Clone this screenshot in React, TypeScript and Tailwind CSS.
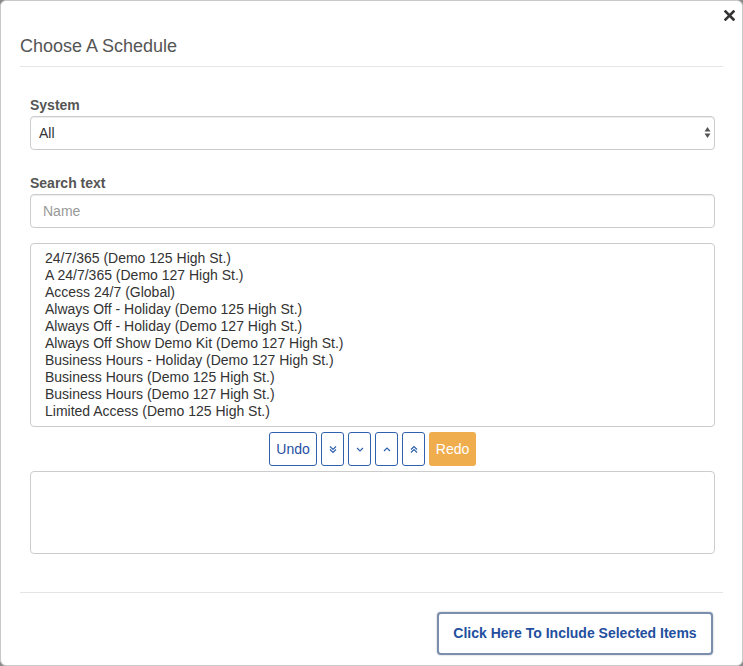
import React, { useState } from 'react';

const schedules = [
  '24/7/365 (Demo 125 High St.)',
  'A 24/7/365 (Demo 127 High St.)',
  'Access 24/7 (Global)',
  'Always Off - Holiday (Demo 125 High St.)',
  'Always Off - Holiday (Demo 127 High St.)',
  'Always Off Show Demo Kit (Demo 127 High St.)',
  'Business Hours - Holiday (Demo 127 High St.)',
  'Business Hours (Demo 125 High St.)',
  'Business Hours (Demo 127 High St.)',
  'Limited Access (Demo 125 High St.)',
];

const Chevron: React.FC<{ up?: boolean; double?: boolean }> = ({ up, double }) => (
  <svg width="8" height="9" viewBox="0 0 8 9" fill="none" stroke="currentColor" strokeWidth="1.2">
    {double ? (
      up ? (
        <>
          <path d="M1 4.5 L4 1.5 L7 4.5" />
          <path d="M1 7.5 L4 4.5 L7 7.5" />
        </>
      ) : (
        <>
          <path d="M1 1.5 L4 4.5 L7 1.5" />
          <path d="M1 4.5 L4 7.5 L7 4.5" />
        </>
      )
    ) : up ? (
      <path d="M1 6 L4 3 L7 6" />
    ) : (
      <path d="M1 3 L4 6 L7 3" />
    )}
  </svg>
);

const App: React.FC = () => {
  const [system, setSystem] = useState('All');
  const [search, setSearch] = useState('');

  return (
    <div className="w-[743px] h-[666px] bg-[#8a8a8a] font-['Liberation_Sans',Arial,sans-serif]">
      <div className="h-full bg-white border border-[#c8c8c8] rounded-[6px] flex flex-col relative">
        <button className="absolute right-[7px] top-[9px] leading-none">
          <svg width="11" height="11" viewBox="0 0 11 11">
            <path d="M1.5 1.5 L9.5 9.5 M9.5 1.5 L1.5 9.5" stroke="#333" strokeWidth="2.6" strokeLinecap="square" />
          </svg>
        </button>

        <div className="mx-[19px] pt-[35px] pb-[10px] border-b border-[#e5e5e5]">
          <h4 className="text-[18px] leading-[20px] text-[#555] font-normal">Choose A Schedule</h4>
        </div>

        <div className="pl-[29px] pr-[27px] pt-[29px] flex-1">
          <label className="block text-[14px] leading-[18px] font-bold text-[#555] mb-[2px]">System</label>
          <div className="relative">
            <select
              value={system}
              onChange={(e) => setSystem(e.target.value)}
              className="w-full h-[34px] appearance-none border border-[#ccc] rounded-[4px] pl-[8px] text-[14px] text-[#333] bg-white shadow-[inset_0_1px_1px_rgba(0,0,0,0.075)]"
            >
              <option>All</option>
            </select>
            <svg className="absolute right-[4px] top-[10px] pointer-events-none" width="7" height="13" viewBox="0 0 7 13">
              <path d="M3.5 1 L6.5 5.5 L0.5 5.5 Z M3.5 12 L6.5 7.5 L0.5 7.5 Z" fill="#555" />
            </svg>
          </div>

          <label className="block text-[14px] leading-[18px] font-bold text-[#555] mt-[24px] mb-[2px]">Search text</label>
          <input
            value={search}
            onChange={(e) => setSearch(e.target.value)}
            placeholder="Name"
            className="w-full h-[34px] border border-[#ccc] rounded-[4px] px-[12px] text-[14px] text-[#333] placeholder-[#999] shadow-[inset_0_1px_1px_rgba(0,0,0,0.075)] outline-none"
          />

          <div className="mt-[15px] h-[184px] border border-[#ccc] rounded-[4px] pl-[14px] pt-[6px] overflow-hidden">
            {schedules.map((s) => (
              <div key={s} className="text-[14px] leading-[17px] text-[#333] whitespace-nowrap">
                {s}
              </div>
            ))}
          </div>

          <div className="flex justify-center gap-[4px] mt-[5px]">
            <button className="h-[34px] w-[48px] border border-[#2e62ad] rounded-[3px] text-[14px] text-[#1e50a2] bg-white">
              Undo
            </button>
            <button className="h-[34px] w-[23px] border border-[#2e62ad] rounded-[3px] text-[#2e62ad] bg-white flex items-center justify-center">
              <Chevron double />
            </button>
            <button className="h-[34px] w-[23px] border border-[#2e62ad] rounded-[3px] text-[#2e62ad] bg-white flex items-center justify-center">
              <Chevron />
            </button>
            <button className="h-[34px] w-[23px] border border-[#2e62ad] rounded-[3px] text-[#2e62ad] bg-white flex items-center justify-center">
              <Chevron up />
            </button>
            <button className="h-[34px] w-[23px] border border-[#2e62ad] rounded-[3px] text-[#2e62ad] bg-white flex items-center justify-center">
              <Chevron up double />
            </button>
            <button className="h-[34px] w-[47px] rounded-[3px] text-[14px] text-white bg-[#f0ad4e]">Redo</button>
          </div>

          <div className="mt-[5px] h-[83px] border border-[#ccc] rounded-[4px]"></div>
        </div>

        <div className="mx-[19px] border-t border-[#e5e5e5] pt-[19px] pb-[10px] flex justify-end pr-[10px]">
          <button className="h-[43px] w-[276px] border-2 border-[#7a8fae] rounded-[4px] bg-white text-[14px] font-bold text-[#1f4f9e] shadow-[0_0_2px_rgba(0,0,0,0.3)]">
            Click Here To Include Selected Items
          </button>
        </div>
      </div>
    </div>
  );
};

export default App;
